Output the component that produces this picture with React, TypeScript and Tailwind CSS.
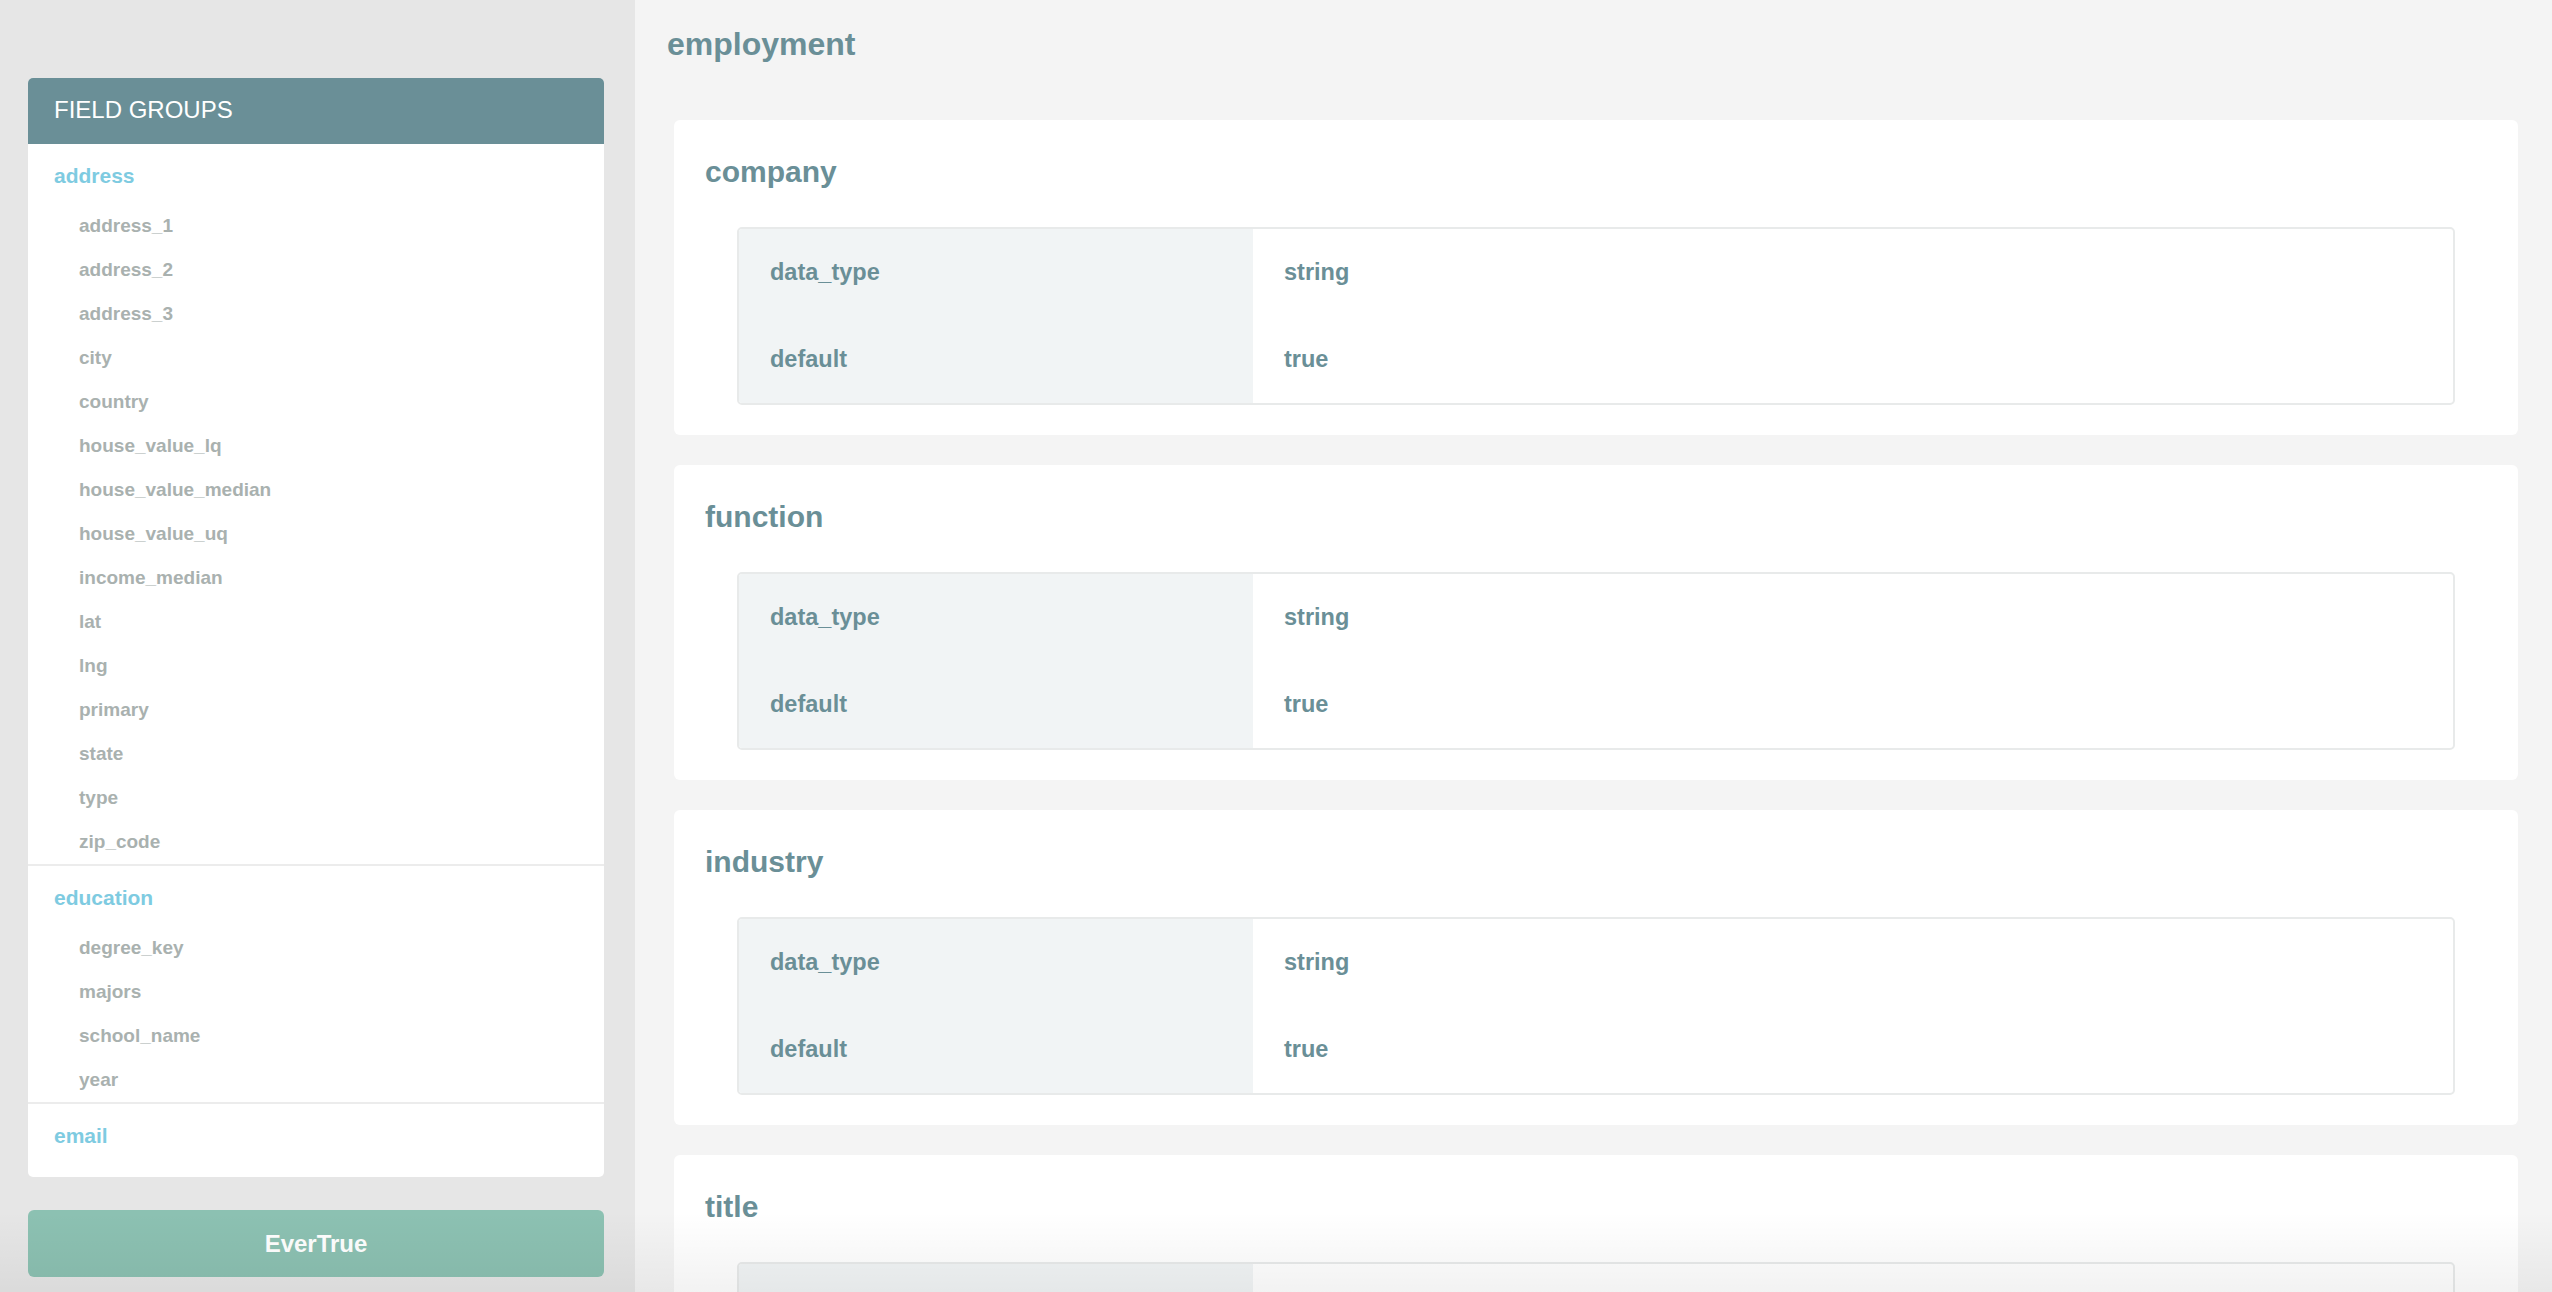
import React from 'react';

const fieldGroups: { name: string; fields: string[] }[] = [
  {
    name: 'address',
    fields: [
      'address_1',
      'address_2',
      'address_3',
      'city',
      'country',
      'house_value_lq',
      'house_value_median',
      'house_value_uq',
      'income_median',
      'lat',
      'lng',
      'primary',
      'state',
      'type',
      'zip_code',
    ],
  },
  { name: 'education', fields: ['degree_key', 'majors', 'school_name', 'year'] },
  { name: 'email', fields: ['address', 'primary', 'type'] },
];

const properties = [
  { name: 'company', rows: [['data_type', 'string'], ['default', 'true']] },
  { name: 'function', rows: [['data_type', 'string'], ['default', 'true']] },
  { name: 'industry', rows: [['data_type', 'string'], ['default', 'true']] },
  { name: 'title', rows: [['data_type', 'string'], ['default', 'true']] },
];

const Sidebar = () => (
  <aside className="flex h-full w-[635px] shrink-0 flex-col bg-[#e6e6e6] pt-[78px] pr-[31px] pb-[15px] pl-[28px]">
    <div className="flex min-h-0 flex-1 flex-col overflow-hidden rounded-[5px] bg-white">
      <div className="flex h-[66px] shrink-0 items-center bg-[#6a8f97] px-[26px] pb-[2px] text-[24px] text-white">
        FIELD GROUPS
      </div>
      <div className="min-h-0 flex-1 overflow-hidden">
        {fieldGroups.map((group) => (
          <div key={group.name} className="border-b-2 border-[#ececec] pt-[10px]">
            <div className="h-[44px] pl-[26px] text-[21px] leading-[44px] font-bold text-[#7ecbe1]">
              {group.name}
            </div>
            <ul className="mt-[6px]">
              {group.fields.map((f) => (
                <li key={f} className="h-[44px] pl-[51px] text-[19px] leading-[44px] font-bold text-[#a9b1af]">
                  {f}
                </li>
              ))}
            </ul>
          </div>
        ))}
      </div>
    </div>
    <button className="mt-[33px] h-[67px] shrink-0 rounded-[6px] bg-[#8cc1b2] text-[24px] font-bold text-white">
      EverTrue
    </button>
  </aside>
);

const PropertyCard = ({ name, rows }: { name: string; rows: string[][] }) => (
  <div className="rounded-md bg-white px-[31px] pt-[30px] pb-[30px]">
    <h3 className="h-[44px] text-[30px] leading-[44px] font-bold text-[#6a8f97]">{name}</h3>
    <div className="mx-8 mt-[33px] overflow-hidden rounded-[5px] border-2 border-[#e8eaea]">
      {rows.map(([k, v]) => (
        <div key={k} className="grid h-[87px] grid-cols-[514px_1fr]">
          <div className="flex items-center bg-[#f1f4f5] px-[31px] text-[23.5px] font-bold text-[#6a8f97]">{k}</div>
          <div className="flex items-center px-[31px] text-[23.5px] font-bold text-[#6a8f97]">{v}</div>
        </div>
      ))}
    </div>
  </div>
);

export default function App() {
  return (
    <div className="relative flex h-screen w-full overflow-hidden font-['Liberation_Sans',Arial,sans-serif]">
      <Sidebar />
      <main className="min-w-0 flex-1 bg-[#f4f4f4] pt-6 pr-[34px] pl-8">
        <h2 className="h-10 text-[32px] leading-[40px] font-bold text-[#6a8f97]">employment</h2>
        <div className="mt-[56px] flex flex-col gap-[30px] pl-[7px]">
          {properties.map((p) => (
            <PropertyCard key={p.name} name={p.name} rows={p.rows} />
          ))}
        </div>
      </main>
      <div className="pointer-events-none absolute inset-x-0 bottom-0 h-[80px] bg-linear-to-b from-transparent to-black/[0.05]" />
    </div>
  );
}
